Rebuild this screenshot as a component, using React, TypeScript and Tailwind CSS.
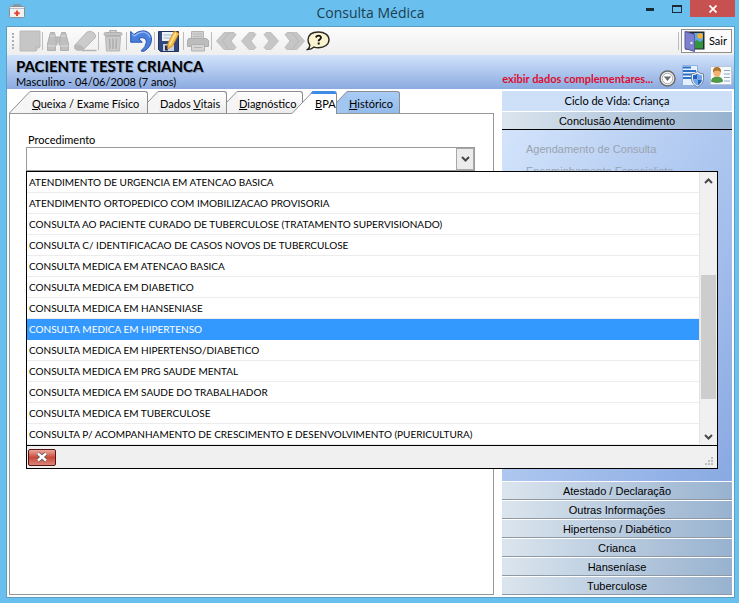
import { useState } from 'react';
import type { ReactNode } from 'react';

const PROCEDURES = [
  'ATENDIMENTO DE URGENCIA EM ATENCAO BASICA',
  'ATENDIMENTO ORTOPEDICO COM IMOBILIZACAO PROVISORIA',
  'CONSULTA AO PACIENTE CURADO DE TUBERCULOSE (TRATAMENTO SUPERVISIONADO)',
  'CONSULTA C/ IDENTIFICACAO DE CASOS NOVOS DE TUBERCULOSE',
  'CONSULTA MEDICA EM ATENCAO BASICA',
  'CONSULTA MEDICA EM DIABETICO',
  'CONSULTA MEDICA EM HANSENIASE',
  'CONSULTA MEDICA EM HIPERTENSO',
  'CONSULTA MEDICA EM HIPERTENSO/DIABETICO',
  'CONSULTA MEDICA EM PRG SAUDE MENTAL',
  'CONSULTA MEDICA EM SAUDE DO TRABALHADOR',
  'CONSULTA MEDICA EM TUBERCULOSE',
  'CONSULTA P/ ACOMPANHAMENTO DE CRESCIMENTO E DESENVOLVIMENTO (PUERICULTURA)',
];

const SECTIONS = [
  'Atestado / Declaração',
  'Outras Informações',
  'Hipertenso / Diabético',
  'Crianca',
  'Hanseníase',
  'Tuberculose',
];

function BagIcon() {
  return (
    <svg width="16" height="14" viewBox="0 0 16 14">
      <path d="M5 3V1h6v2" fill="none" stroke="#8b8f94" strokeWidth="1.5" />
      <rect x=".5" y="2.5" width="15" height="11" rx="1" fill="#f1f1f1" stroke="#8b8f94" />
      <path d="M1 4.5h14" stroke="#b9bcc0" />
      <path d="M8 6.5v5.500M5.300 9.200h5.400" stroke="#e04632" strokeWidth="2" />
    </svg>
  );
}

function NoteIcon() {
  return (
    <svg width="22" height="22" viewBox="0 0 22 22">
      <path d="M1 1h20v16l-4 4H1z" fill="#c6c6c6" stroke="#bababa" />
      <path d="M21 17h-4v4" fill="#dcdcdc" stroke="#b0b0b0" />
    </svg>
  );
}

function BinocularsIcon() {
  return (
    <svg width="24" height="22" viewBox="0 0 24 22">
      <g fill="#bfbfbf" stroke="#b0b0b0">
        <path d="M4.500 2.500h4l1 4.500 1.500 3v5h-1.500v5.500h-8V14L3 8z" />
        <path d="M15.500 2.500h4L21 8l1.500 6v6.500h-8V15H13v-5l1.500-3z" />
        <path d="M10 7h4v5h-4z" />
      </g>
      <path d="M4 6h5M15 6h5M1.500 16h8M14.500 16h8" stroke="#dedede" />
    </svg>
  );
}

function EraserIcon() {
  return (
    <svg width="23" height="22" viewBox="0 0 23 22">
      <path d="M13 2q4-2 7 1t1 5L10 19q-3 2-7 1t-2-5z" fill="#cbcbcb" stroke="#b8b8b8" />
      <path d="M1 14.500q6-1 9.500 4.500l-2.500 1.500H3q-3-2-2-6z" fill="#b9b9b9" />
      <path d="M8 20.500h14.500" stroke="#b4b4b4" strokeWidth="1.500" />
    </svg>
  );
}

function TrashIcon() {
  return (
    <svg width="20" height="22" viewBox="0 0 20 22">
      <path d="M7 2.500V.8h6v1.700" fill="none" stroke="#b0b0b0" strokeWidth="1.500" />
      <rect x="1" y="2.500" width="18" height="3" rx="1.500" fill="#c2c2c2" stroke="#b0b0b0" />
      <path d="M2.500 6.500h15l-1 14.500h-13z" fill="#cbcbcb" stroke="#b5b5b5" />
      <path d="M6.500 8.500l.5 10.500M10 8.500V19M13.500 8.500L13 19" stroke="#adadad" strokeWidth="1.500" />
    </svg>
  );
}

function UndoIcon() {
  return (
    <svg width="22" height="22" viewBox="0 0 22 22">
      <path
        d="M.7 1.500l3.300 3Q8.500.6 13.500.8q7.500.7 8 8.200.2 7.500-7.500 12.300l-3-.3q5-4.500 5.300-8.500.2-4.200-4-4.800-2 0-3.500 1l3.500 3.500H.7z"
        fill="#4a80dc"
        stroke="#2757b4"
      />
      <path d="M2 4l2.500 2Q9 1.800 13.500 2.200q5 .8 6.500 5.300" fill="none" stroke="#93b9f5" strokeWidth="1.200" />
    </svg>
  );
}

function SaveIcon() {
  return (
    <svg width="22" height="22" viewBox="0 0 22 22">
      <path d="M.5 1.500h20v20h-18l-2-2z" fill="#31477c" stroke="#22315c" />
      <path d="M4 2h13v9H4z" fill="#eef2f8" />
      <path d="M5.500 5h9M5.500 8h7" stroke="#9bb0cf" />
      <path d="M5 14h11v7H5z" fill="#c9d1df" />
      <path d="M7 15.500h3v5H7z" fill="#22315c" />
      <path d="M16.500 1l4.500 2.500-6.500 12.500-5 3 .5-6z" fill="#f8c048" stroke="#cf8420" strokeWidth=".8" />
      <path d="M17.800 3l-6 11.500" stroke="#ffe79d" strokeWidth="1.500" />
    </svg>
  );
}

function PrinterIcon() {
  return (
    <svg width="22" height="22" viewBox="0 0 22 22">
      <path d="M4.500 1.500h12V9h-12z" fill="#d0d0d0" stroke="#b4b4b4" />
      <path d="M6 4h9M6 6.500h9" stroke="#b8b8b8" />
      <path d="M1.500 8.500h18l2 2v6h-21v-6z" fill="#bcbcbc" stroke="#adadad" />
      <path d="M4.500 14.500h13V21h-13z" fill="#d4d4d4" stroke="#b0b0b0" />
      <path d="M7 17.500h8" stroke="#b4b4b4" />
    </svg>
  );
}

// One or two thick chevrons; `flip` points them to the right
function ChevronIcon({ double = false, flip = false }: { double?: boolean; flip?: boolean }) {
  const width = double ? 21 : 16;
  return (
    <svg width={width} height="20" viewBox={`0 0 ${width} 20`} className={flip ? '-scale-x-100' : ''}>
      <path d="M8 1.500h5l2 2L10 10l5 6.500-2 2H8L.5 10z" fill="#c6c6c6" stroke="#bababa" strokeWidth=".8" />
      {double && (
        <path d="M13 1.500h5l2 2L15 10l5 6.500-2 2h-5L6.500 10z" fill="#c6c6c6" stroke="#b4b4b4" strokeWidth=".8" />
      )}
    </svg>
  );
}

function HelpIcon() {
  return (
    <svg width="24" height="20" viewBox="0 0 24 20">
      <path
        d="M12.500 1C18.500 1 23 4.200 23 8.800s-4.500 8-10.500 8q-2.500 0-4.500-.7Q5.500 18.500 1.500 18.500q2.500-2 2.300-4.500Q2 11.500 2 8.800 2.500 1 12.500 1z"
        fill="#fbf3cf"
        stroke="#2a2a22"
        strokeWidth="1.400"
      />
      <path d="M10 6.500Q10.300 4.700 12.500 4.700t2.500 1.900q0 1.200-1.400 2-1 .6-1 1.700" fill="none" stroke="#111" strokeWidth="1.800" />
      <path d="M11.700 11.500h2v2h-2z" fill="#111" />
    </svg>
  );
}

function DoorIcon() {
  return (
    <svg width="21" height="22" viewBox="0 0 21 22">
      <path d="M1 1.500h19.500v18H1z" fill="#23272f" />
      <path d="M10 3h9v9h-9z" fill="#5ba7e8" />
      <circle cx="16" cy="6" r="2.800" fill="#f7b32f" />
      <path d="M10 12l3-2 3 2 3-2v8.500h-9z" fill="#33953a" />
      <path d="M1 1.500l9.500 3v17l-9.500-3z" fill="#7d80cc" stroke="#5457a4" />
      <circle cx="7.500" cy="13" r="1.200" fill="#e9e9ff" />
    </svg>
  );
}

function ExpandIcon() {
  return (
    <svg width="17" height="17" viewBox="0 0 17 17">
      <circle cx="8.500" cy="8.500" r="7.500" fill="#f5f5f5" stroke="#6b6b6b" strokeWidth="1.500" />
      <circle cx="8.500" cy="8.500" r="5.300" fill="#fff" stroke="#a9a9a9" />
      <path d="M4.800 6.500h7.400l-3.700 4.500z" fill="#6b6b6b" />
    </svg>
  );
}

function ShieldDocIcon() {
  return (
    <svg width="23" height="24" viewBox="0 0 23 24">
      <path d="M1.500 1.500h15v20h-15z" fill="#e6f0fc" stroke="#8fb2dc" />
      <path d="M2 3.500h8M2 7h13M2 10.500h11M2 14h9" stroke="#2c6fc9" strokeWidth="2" />
      <path d="M16.500 7.500q3 2.500 6 2.500v4.500q0 5.500-6 8.500-6-3-6-8.500V10q3 0 6-2.500z" fill="#f1f5fa" stroke="#69809c" />
      <path d="M16.500 9.500V15.500H12v-4.300q2.500-.2 4.500-1.700zM16.500 15.500H21q-.5 4-4.500 6z" fill="#1f63c6" />
      <path d="M16.500 9.500q2 1.500 4.500 1.700v4.300h-4.500zM16.500 15.500v6q-4-2-4.500-6z" fill="#6da4ea" />
    </svg>
  );
}

function PersonCardIcon() {
  return (
    <svg width="22" height="19" viewBox="0 0 22 19">
      <path d="M.5.5h21v18H.5z" fill="#f7fafd" stroke="#b9c6d4" />
      <path d="M14 4.500h6M14 8h6M14 11.500h6M14 15h6" stroke="#8ea4bf" strokeWidth="1.200" />
      <path d="M1.500 15.500q0-4.500 5.500-4.500t5.500 4.500q-5 2-11 0z" fill="#4f9c45" stroke="#357a30" strokeWidth=".7" />
      <ellipse cx="7" cy="6.500" rx="3.700" ry="4.700" fill="#f0b26c" />
      <path d="M3 6.500Q2.500 1 7 1t4 5.500Q9.500 4.500 7 4.500T3 6.500z" fill="#b0742c" />
    </svg>
  );
}

function Chevron({ up = false }: { up?: boolean }) {
  return (
    <svg width="9" height="6" viewBox="0 0 9 6" className={up ? 'rotate-180' : ''}>
      <path d="M1 1l3.500 3.500L8 1" fill="none" stroke="#484848" strokeWidth="2" />
    </svg>
  );
}

function Divider() {
  return <div className="h-[18px] w-px bg-[#bcbcbc]" />;
}

function ToolButton({ label, className, children }: { label: string; className: string; children: ReactNode }) {
  return (
    <button aria-label={label} className={`flex shrink-0 items-center justify-center ${className}`}>
      {children}
    </button>
  );
}

type TabProps = {
  text: string;
  hot: number;
  selected?: boolean;
  blue?: boolean;
  className?: string;
};

// Slanted left edge + rounded right corner. `hot` is the index of the underlined letter
function Tab({ text, hot, selected = false, blue = false, className = '' }: TabProps) {
  const fill = selected ? '#fff' : blue ? '#a0c6f1' : '#f5f5f5';
  const body = selected
    ? 'border-t-[3px] border-t-[#3f8ce4] bg-white'
    : blue
      ? 'border-t border-t-[#8c8c8c] bg-gradient-to-b from-[#a9cdf5] to-[#93bbea]'
      : 'border-t border-t-[#8c8c8c] bg-gradient-to-b from-white to-[#ebebeb]';
  return (
    <button role="tab" aria-selected={selected} className={`relative flex shrink-0 ${selected ? 'h-[23px]' : 'h-[22px]'} ${className}`}>
      <svg width="22" height="23" viewBox="0 0 22 23" className="h-full shrink-0" preserveAspectRatio="xMinYMin slice">
        <path d="M0 22.500L20 1.500Q20.500.5 22 .5V23H0z" fill={fill} />
        <path d="M0 22.500L20 1.500Q20.500.5 22 .5" fill="none" stroke="#8c8c8c" />
        {selected && <path d="M18.500 3L20.500 0H22v3z" fill="#3f8ce4" />}
      </svg>
      <span className={`flex h-full flex-1 items-center rounded-tr-[3px] border-r border-r-[#8c8c8c] pl-px whitespace-nowrap ${body}`}>
        <span className={selected ? 'pt-px' : 'pt-[3px]'}>
          {text.slice(0, hot)}
          <u>{text[hot]}</u>
          {text.slice(hot + 1)}
        </span>
      </span>
    </button>
  );
}

function SectionButton({ label, open = false }: { label: string; open?: boolean }) {
  return (
    <button
      className={`h-[19px] w-full border-t border-b border-t-white bg-gradient-to-r from-[#dbe5ee] to-[#98b2cf] pt-px font-['Liberation_Sans',sans-serif] leading-[16px] ${
        open ? 'border-b-black' : 'border-b-[#8e99a5]'
      }`}
    >
      {label}
    </button>
  );
}

export default function App() {
  const [selected, setSelected] = useState(7);
  const [query, setQuery] = useState('');

  return (
    <div className="flex min-h-screen flex-col bg-[#69c0ee] pr-1 pb-[5px] pl-[6px] font-['Lato','Open_Sans',sans-serif] text-[11px] text-black">
      <header className="relative flex h-[26px] shrink-0 items-center justify-center">
        <div className="absolute top-1 left-[3px]">
          <BagIcon />
        </div>
        <h1 className="font-['Open_Sans',sans-serif] text-[14px] leading-[20px] text-[#1d3d50]">Consulta Médica</h1>
        <div className="absolute top-0 right-0 flex h-[17px]">
          <button aria-label="Minimizar" className="flex w-[27px] items-end justify-center pb-[6px]">
            <span className="h-[3px] w-2 bg-[#1b2b35]" />
          </button>
          <button aria-label="Maximizar" className="flex w-[27px] items-center justify-center">
            <span className="h-2 w-[10px] border border-t-2 border-[#1b2b35]" />
          </button>
          <button aria-label="Fechar" className="flex w-[45px] items-center justify-center bg-[#c75050]">
            <svg width="8" height="8" viewBox="0 0 8 8">
              <path d="M.5.5l7 7M7.500.5l-7 7" stroke="#fff" strokeWidth="1.700" />
            </svg>
          </button>
        </div>
      </header>

      <div className="flex flex-1 flex-col border border-[#5c9fc4] bg-white">
        <div className="flex h-7 shrink-0 items-center justify-between bg-gradient-to-b from-[#fcfcfc] to-[#eeeeee] pr-[2px] pl-[5px]">
          <div className="flex items-center">
            <div className="mr-1 h-4 w-[2px] border-l-2 border-dotted border-[#b0b0b0]" />
            <ToolButton label="Novo" className="w-6"><NoteIcon /></ToolButton>
            <Divider />
            <ToolButton label="Localizar" className="w-[30px]"><BinocularsIcon /></ToolButton>
            <ToolButton label="Limpar" className="w-[25px]"><EraserIcon /></ToolButton>
            <Divider />
            <ToolButton label="Excluir" className="w-[27px]"><TrashIcon /></ToolButton>
            <Divider />
            <ToolButton label="Desfazer" className="w-[27px]"><UndoIcon /></ToolButton>
            <Divider />
            <ToolButton label="Salvar" className="w-7"><SaveIcon /></ToolButton>
            <Divider />
            <ToolButton label="Imprimir" className="w-[27px]"><PrinterIcon /></ToolButton>
            <Divider />
            <ToolButton label="Primeiro" className="w-7"><ChevronIcon double /></ToolButton>
            <ToolButton label="Anterior" className="w-[18px]"><ChevronIcon /></ToolButton>
            <ToolButton label="Próximo" className="w-[25px]"><ChevronIcon flip /></ToolButton>
            <ToolButton label="Último" className="w-[22px]"><ChevronIcon double flip /></ToolButton>
            <ToolButton label="Ajuda" className="w-[26px]"><HelpIcon /></ToolButton>
          </div>
          <div className="flex items-center gap-[2px]">
            <Divider />
            <button className="flex h-6 items-center gap-1 border border-[#8f8f8f] bg-[#fbfbfb] pr-1 pl-[2px]">
              <DoorIcon />
              Sair
            </button>
          </div>
        </div>

        <div className="flex h-[34px] shrink-0 justify-between bg-gradient-to-b from-[#d2e3fa] to-[#8baae0] pr-[2px] pl-[9px]">
          <div className="pt-[2px]">
            <h2 className="text-[15px] leading-[18px] font-bold [text-shadow:1px_1px_0_#8d9cb8]">PACIENTE TESTE CRIANCA</h2>
            <p className="leading-[14px]">Masculino - 04/06/2008 (7 anos)</p>
          </div>
          <div className="flex items-end">
            <a href="#dados" className="pr-[6px] pb-[2px] leading-4 font-bold text-[#dc0f30]">
              exibir dados complementares...
            </a>
            <button aria-label="Expandir" className="pr-[5px] pb-[2px]"><ExpandIcon /></button>
            <button aria-label="Documento protegido" className="pr-[6px] pb-px"><ShieldDocIcon /></button>
            <button aria-label="Cadastro" className="pb-1"><PersonCardIcon /></button>
          </div>
        </div>

        <div className="flex flex-1 gap-2 p-[2px]">
          <main className="flex flex-1 flex-col">
            <div role="tablist" className="flex h-[22px]">
              <Tab text="Queixa / Exame Físico" hot={0} className="z-[3] w-[139px]" />
              <Tab text="Dados Vitais" hot={6} className="z-[2] -ml-[11px] w-[90px]" />
              <Tab text="Diagnóstico" hot={0} className="z-[1] -ml-[11px] w-[87px]" />
              <Tab text="BPA" hot={0} selected className="z-[4] -ml-[11px] w-[45px]" />
              <Tab text="Histórico" hot={0} blue className="-ml-[11px] w-[74px]" />
            </div>
            <div className="flex-1 border border-[#979797] pt-[19px] pr-[18px] pl-4">
              <label htmlFor="procedimento" className="block pl-[2px] leading-[14px]">
                Procedimento
              </label>
              <div className="relative flex h-6 items-stretch border border-[#9a9a9a] bg-white">
                <input
                  id="procedimento"
                  value={query}
                  onChange={(e) => setQuery(e.target.value)}
                  className="min-w-0 flex-1 px-1 outline-none"
                />
                <button aria-label="Abrir lista" className="flex w-[18px] items-center justify-center border border-[#a8a8a8] bg-[#ececec]">
                  <Chevron />
                </button>

                <div className="absolute top-[23px] -right-[244px] -left-px z-10 border border-black bg-white">
                  <div className="flex">
                    <ul role="listbox" aria-label="Procedimentos" className="flex-1 border-r border-[#e4e4e4] text-[10px]">
                      {PROCEDURES.map((name, i) => (
                        <li
                          key={name}
                          role="option"
                          aria-selected={i === selected}
                          onClick={() => setSelected(i)}
                          className={`h-[21px] border-b pl-[2px] leading-[20px] whitespace-nowrap ${
                            i === selected ? 'border-[#3399ff] bg-[#3399ff] text-white' : 'border-[#ececec]'
                          }`}
                        >
                          {name}
                        </li>
                      ))}
                    </ul>
                    <div className="flex w-[17px] flex-col items-center bg-[#f0f0f0]">
                      <button aria-label="Rolar para cima" className="flex h-[17px] w-full items-center justify-center"><Chevron up /></button>
                      <div className="mt-[86px] h-[124px] w-[15px] bg-[#cdcdcd]" />
                      <button aria-label="Rolar para baixo" className="mt-auto flex h-[17px] w-full items-center justify-center"><Chevron /></button>
                    </div>
                  </div>
                  <div className="flex h-[23px] items-center justify-between border-t border-black bg-[#f0f0f0] px-px">
                    <button
                      aria-label="Limpar seleção"
                      className="flex h-[17px] w-7 items-center justify-center rounded-[2px] border border-[#5a1512] bg-gradient-to-b from-[#e9a79d] via-[#c9483a] to-[#d98478]"
                    >
                      <svg width="12" height="10" viewBox="0 0 12 10">
                        <path d="M2 1.500l8 7M10 1.500l-8 7" stroke="#555" strokeWidth="4" />
                        <path d="M2 1.500l8 7M10 1.500l-8 7" stroke="#fff" strokeWidth="2.400" />
                      </svg>
                    </button>
                    <svg width="9" height="9" viewBox="0 0 9 9" className="mt-2 mr-[2px]">
                      <path d="M6 0h2v2H6zM3 3h2v2H3zM6 3h2v2H6zM0 6h2v2H0zM3 6h2v2H3zM6 6h2v2H6z" fill="#bdbdbd" />
                    </svg>
                  </div>
                </div>
              </div>
            </div>
          </main>

          <aside className="flex w-[230px] shrink-0 flex-col">
            <div className="h-5 bg-[#cde0f8] text-center leading-[20px]">Ciclo de Vida: Criança</div>
            <SectionButton label="Conclusão Atendimento" open />
            <div className="flex flex-1 flex-col items-start bg-gradient-to-br from-[#d3e4fb] to-[#88a9e2] pt-[11px] pl-6 font-['Liberation_Sans',sans-serif] leading-[16px] text-[#9aa3b0]">
              <a href="#agendamento" className="mb-[6px]">Agendamento de Consulta</a>
              <a href="#encaminhamento">Encaminhamento Especialista</a>
            </div>
            {SECTIONS.map((label) => (
              <SectionButton key={label} label={label} />
            ))}
          </aside>
        </div>
      </div>
    </div>
  );
}
